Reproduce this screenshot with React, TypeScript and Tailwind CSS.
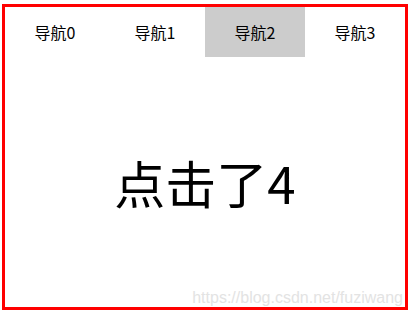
const navs = ["导航0", "导航1", "导航2", "导航3"];

export default function App() {
  const active = 2;

  return (
    <div
      className="relative w-[411px] h-[314px] bg-white pt-[4px] pl-[2px]"
      style={{ fontFamily: '"Noto Sans CJK SC", "Noto Sans", sans-serif' }}
    >
      <div className="w-[406px] h-[306px] border-[3px] border-[#ff0000] flex flex-col">
        {/* nav bar */}
        <div className="flex h-[50px]">
          {navs.map((n, i) => (
            <div
              key={n}
              className={`w-[100px] flex items-center justify-center text-base text-black ${
                i === active ? "bg-[#cccccc]" : ""
              }`}
            >
              {n}
            </div>
          ))}
        </div>

        {/* content */}
        <div className="flex-1 flex items-center justify-center">
          <span className="text-[51px] leading-none text-black">点击了4</span>
        </div>
      </div>

      {/* watermark */}
      <div
        className="absolute right-[8px] bottom-[8px] text-[16px] leading-none text-[#e3e3e3]"
        style={{ fontFamily: '"Liberation Sans", Arial, sans-serif' }}
      >
        https://blog.csdn.net/fuziwang
      </div>
    </div>
  );
}
